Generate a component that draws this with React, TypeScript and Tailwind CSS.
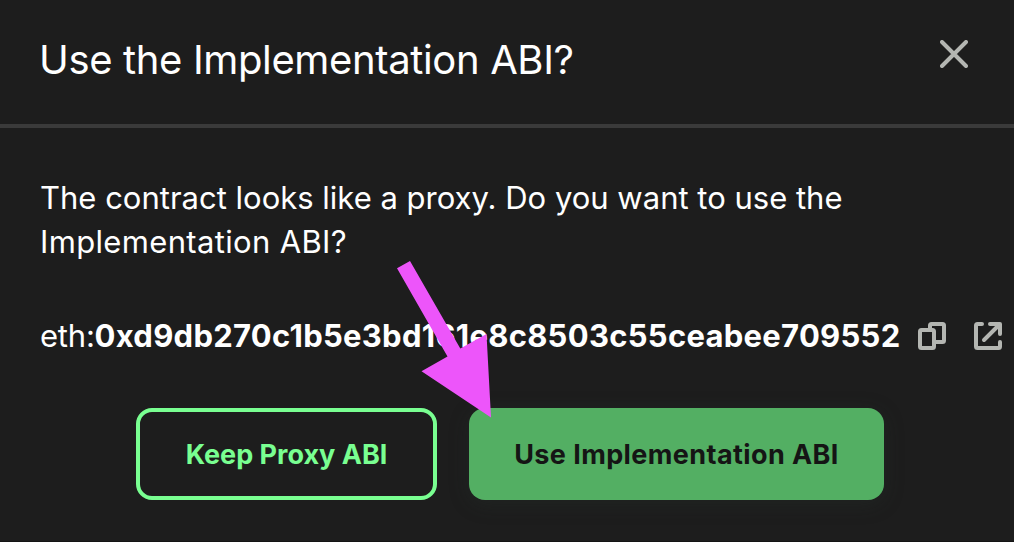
function CloseIcon() {
  return (
    <svg width="28" height="28" viewBox="0 0 28 28" fill="none" stroke="#b4b6b2" strokeWidth="4" strokeLinecap="round">
      <path d="M2 2 26 26M26 2 2 26" />
    </svg>
  );
}

function CopyIcon() {
  return (
    <svg width="28" height="28" viewBox="0 0 28 28" fill="none" stroke="#b4b6b2" strokeWidth="4" strokeLinejoin="round">
      <rect x="2" y="8" width="14" height="18" rx="1.5" />
      <path d="M12 8V3.5A1.5 1.5 0 0 1 13.5 2H24.5A1.5 1.5 0 0 1 26 3.5V18.5A1.5 1.5 0 0 1 24.5 20H16" />
    </svg>
  );
}

function ExternalIcon() {
  return (
    <svg width="28" height="28" viewBox="0 0 28 28" fill="none" stroke="#b4b6b2" strokeWidth="4" strokeLinecap="round" strokeLinejoin="round">
      <path d="M8 2H3.5A1.5 1.5 0 0 0 2 3.5V24.5A1.5 1.5 0 0 0 3.5 26H24.5A1.5 1.5 0 0 0 26 24.5V20" />
      <path d="M16 2H26V12M25 3 10 18" />
    </svg>
  );
}

export default function App() {
  return (
    <div className="relative flex h-[542px] w-[1014px] flex-col overflow-hidden border-b border-[#141414] bg-[#1d1d1d] font-['Inter','Liberation_Sans',sans-serif] text-white">
      <header className="flex h-32 shrink-0 items-start justify-between border-b-4 border-[#3a3a3a] pl-10 pr-[46px]">
        <h1 className="-ml-px mt-9 whitespace-nowrap text-[40px] font-normal leading-[48px] tracking-[-0.36px]">Use the Implementation ABI?</h1>
        <button aria-label="Close" className="mt-10">
          <CloseIcon />
        </button>
      </header>
      <main className="flex flex-col pl-10">
        <p className="mt-12 whitespace-nowrap text-[31px] font-normal leading-[44px] tracking-[0px]">
          The contract looks like a proxy. Do you want to use the
          <br />
          <span className="tracking-[0.34px]">Implementation ABI?</span>
        </p>
        <div className="mt-[50px] flex h-11 items-center whitespace-nowrap text-[31px] leading-[44px]">
          <div className="w-[54.5px] shrink-0 font-normal tracking-[-0.2px]">eth:</div>
          <div className="w-[823.5px] shrink-0 font-bold tracking-[0.28px]">0xd9db270c1b5e3bd161e8c8503c55ceabee709552</div>
          <div className="flex shrink-0 gap-7">
            <CopyIcon />
            <ExternalIcon />
          </div>
        </div>
        <div className="ml-24 mt-[50px] flex gap-8 whitespace-nowrap text-[27px] font-bold">
          <button className="h-[92px] w-[301px] rounded-2xl border-4 border-[#79ff91] pt-0.5 text-[#79ff91]">
            <span className="tracking-[0px]">Keep Proxy ABI</span>
          </button>
          <button className="h-[92px] w-[415px] rounded-2xl bg-[#53af63] pt-0.5 text-[#151515] shadow-[0_4px_20px_rgba(40,54,48,0.3)]">
            <span className="tracking-[0.4px]">Use Implementation ABI</span>
          </button>
        </div>
      </main>
      <svg className="absolute left-[397px] top-[260px]" width="96" height="158" viewBox="0 0 96 158" fill="#ed55fa">
        <path d="M0 8.2 13 1 63.3 88.6 89.5 74 94 157.5 24.5 111.3 50.5 96.5Z" />
      </svg>
    </div>
  );
}
